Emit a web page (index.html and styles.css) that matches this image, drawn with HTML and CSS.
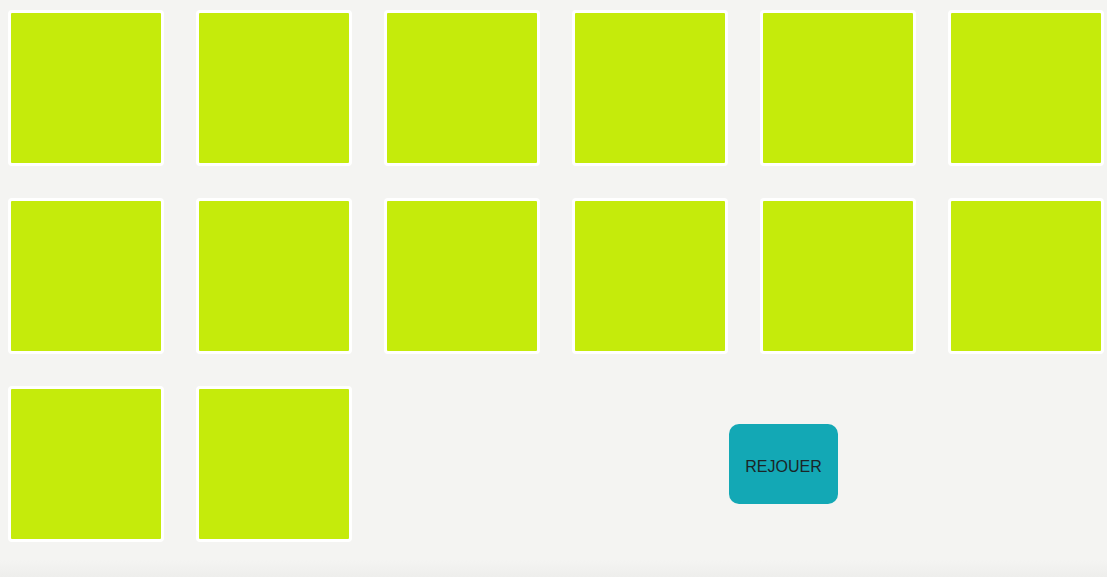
FILE: index.html
```html
<!DOCTYPE html>
<html lang="fr">
<head>
<meta charset="utf-8">
<title>Memory</title>
<link rel="stylesheet" href="styles.css">
</head>
<body>
<div class="board">
  <div class="card"></div>
  <div class="card"></div>
  <div class="card"></div>
  <div class="card"></div>
  <div class="card"></div>
  <div class="card"></div>
  <div class="card"></div>
  <div class="card"></div>
  <div class="card"></div>
  <div class="card"></div>
  <div class="card"></div>
  <div class="card"></div>
  <div class="card"></div>
  <div class="card"></div>
  <button class="replay">REJOUER</button>
</div>
</body>
</html>
```
FILE: styles.css
```css
html, body {
  margin: 0;
  padding: 0;
}
body {
  background: linear-gradient(to bottom, #f4f4f2 0, #f4f4f2 560px, #eeeeec 577px);
  min-height: 577px;
  font-family: "Liberation Sans", Arial, sans-serif;
}
.board {
  display: flex;
  flex-wrap: wrap;
  align-items: center;
  gap: 32px;
  padding: 10px 0 0 8px;
  width: 1100px;
}
.card {
  width: 150px;
  height: 150px;
  background: #c5eb0b;
  border: 3px solid #ffffff;
  border-radius: 4px;
}
.replay {
  margin-left: 345px;
  width: 109px;
  height: 80px;
  background: #13a8b5;
  border: none;
  border-radius: 10px;
  color: #1b2527;
  font-family: "Liberation Sans", Arial, sans-serif;
  font-size: 16px;
  padding: 6px 0 0;
}
```
